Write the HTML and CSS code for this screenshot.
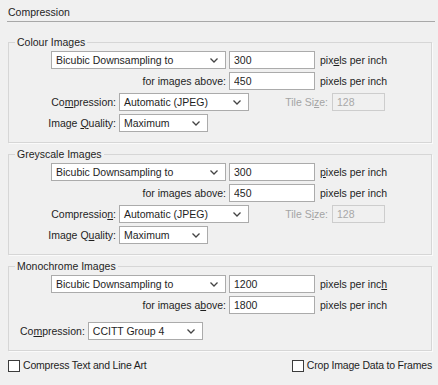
FILE: index.html
```html
<!DOCTYPE html>
<html lang="en">
<head>
  <meta charset="UTF-8" />
  <title>Compression</title>
  <link rel="stylesheet" href="styles.css">
</head>
<body>
  <div class="title">Compression</div>

  <fieldset class="group">
    <legend>Colour Images</legend>
    <div class="row row-a">
      <div class="select w-method"><span>Bicubic Downsampling to</span><svg class="chev" width="8" height="5" viewBox="0 0 8 5"><polyline points="0.5,0.5 4,4 7.5,0.5" /></svg></div>
      <input class="field" type="text" value="300" />
      <span class="unit">pix<u>e</u>ls per inch</span>
    </div>
    <div class="row row-b">
      <label class="lbl w-above">for ima<u>g</u>es above:</label>
      <input class="field" type="text" value="450" />
      <span class="unit">pixels per inch</span>
    </div>
    <div class="row row-c">
      <label class="lbl w-name">Co<u>m</u>pression:</label>
      <div class="select w-comp"><span>Automatic (JPEG)</span><svg class="chev" width="8" height="5" viewBox="0 0 8 5"><polyline points="0.5,0.5 4,4 7.5,0.5" /></svg></div>
      <label class="lbl off w-tile">Tile Si<u>z</u>e:</label>
      <input class="field tile" type="text" value="128" disabled />
    </div>
    <div class="row row-c">
      <label class="lbl w-name">Image <u>Q</u>uality:</label>
      <div class="select w-qual"><span>Maximum</span><svg class="chev" width="8" height="5" viewBox="0 0 8 5"><polyline points="0.5,0.5 4,4 7.5,0.5" /></svg></div>
    </div>
  </fieldset>

  <fieldset class="group">
    <legend>Greyscale Images</legend>
    <div class="row row-a">
      <div class="select w-method"><span>Bicubic Downsampling to</span><svg class="chev" width="8" height="5" viewBox="0 0 8 5"><polyline points="0.5,0.5 4,4 7.5,0.5" /></svg></div>
      <input class="field" type="text" value="300" />
      <span class="unit"><u>p</u>ixels per inch</span>
    </div>
    <div class="row row-b">
      <label class="lbl w-above">for ima<u>g</u>es above:</label>
      <input class="field" type="text" value="450" />
      <span class="unit">pixels per inch</span>
    </div>
    <div class="row row-c">
      <label class="lbl w-name">Compressio<u>n</u>:</label>
      <div class="select w-comp"><span>Automatic (JPEG)</span><svg class="chev" width="8" height="5" viewBox="0 0 8 5"><polyline points="0.5,0.5 4,4 7.5,0.5" /></svg></div>
      <label class="lbl off w-tile">Tile S<u>i</u>ze:</label>
      <input class="field tile" type="text" value="128" disabled />
    </div>
    <div class="row row-c">
      <label class="lbl w-name">Image Q<u>u</u>ality:</label>
      <div class="select w-qual"><span>Maximum</span><svg class="chev" width="8" height="5" viewBox="0 0 8 5"><polyline points="0.5,0.5 4,4 7.5,0.5" /></svg></div>
    </div>
  </fieldset>

  <fieldset class="group">
    <legend>Monochrome Images</legend>
    <div class="row row-a">
      <div class="select w-method"><span>Bicubic Downsampling to</span><svg class="chev" width="8" height="5" viewBox="0 0 8 5"><polyline points="0.5,0.5 4,4 7.5,0.5" /></svg></div>
      <input class="field" type="text" value="1200" />
      <span class="unit">pixels per inc<u>h</u></span>
    </div>
    <div class="row row-b">
      <label class="lbl w-above">for images a<u>b</u>ove:</label>
      <input class="field" type="text" value="1800" />
      <span class="unit">pixels per inch</span>
    </div>
    <div class="row row-mono">
      <label class="lbl">Co<u>m</u>pression:</label>
      <div class="select w-mono"><span>CCITT Group 4</span><svg class="chev" width="8" height="5" viewBox="0 0 8 5"><polyline points="0.5,0.5 4,4 7.5,0.5" /></svg></div>
    </div>
  </fieldset>

  <div class="checks">
    <label class="check"><span class="box"></span>Compress Text and Line Art</label>
    <label class="check"><span class="box"></span>Crop Image Data to Frames</label>
  </div>
</body>
</html>
```

FILE: styles.css
```css
body {
  margin: 0;
  width: 438px;
  height: 385px;
  background: #f0f0f0;
  color: #1e1e1e;
  font-family: "Liberation Sans", Arial, sans-serif;
  font-size: 10.5px;
  line-height: 13px;
  overflow: hidden;
}
u {
  text-decoration-thickness: 1px;
  text-underline-offset: 1px;
}
.title {
  margin-left: 7px;
  margin-right: 3px;
  padding: 6px 0 2px 1px;
  border-bottom: 1px solid #a8a8a8;
}
.group {
  margin: 14px 6px 0 8px;
  padding: 2px 0 10px 0;
  border: 1px solid #d6d6d6;
  box-shadow: 1px 1px 0 #fafafa;
  min-width: 0;
}
.group + .group {
  margin-top: 5px;
}
.group legend {
  margin-left: 6px;
  padding: 0 2px;
  line-height: 13px;
}
.row {
  display: flex;
  align-items: center;
  height: 18px;
  margin-top: 3px;
  gap: 3px;
}
.group .row:first-of-type {
  margin-top: 0;
}
.row-a, .row-b {
  margin-left: 42px;
}
.row-c .lbl.w-name {
  width: 107px;
}
.row-mono {
  margin-top: 8px;
  margin-left: 11px;
}
.lbl {
  text-align: right;
  white-space: nowrap;
}
.lbl.off {
  color: #a4a4a4;
}
.w-above {
  width: 175px;
}
.w-tile {
  width: 75px;
  margin-left: 1px;
  margin-right: 1px;
}
.select {
  box-sizing: border-box;
  height: 18px;
  display: flex;
  align-items: center;
  justify-content: space-between;
  padding: 0 7px 0 4px;
  background: #fff;
  border: 1px solid #ababab;
  white-space: nowrap;
}
.chev {
  fill: none;
  stroke: #444;
  stroke-width: 1.3;
}
.w-method { width: 175px; }
.w-comp { width: 130px; }
.w-qual { width: 89px; }
.w-mono { width: 115px; }
.field {
  box-sizing: border-box;
  width: 86px;
  height: 18px;
  margin: 0;
  padding: 0 4px;
  border: 1px solid #ababab;
  background: #fff;
  color: #1e1e1e;
  font: inherit;
  outline: none;
}
.field.tile {
  width: 53px;
  background: #f0f0f0;
  border-color: #cdcdcd;
  color: #a8a8a8;
}
.unit {
  margin-left: 2px;
  white-space: nowrap;
}
.checks {
  display: flex;
  justify-content: space-between;
  margin: 8px 6px 0 8px;
}
.check {
  display: flex;
  align-items: center;
  gap: 3px;
  letter-spacing: -0.2px;
}
.box {
  box-sizing: border-box;
  width: 12px;
  height: 12px;
  background: #fff;
  border: 1px solid #3c3c3c;
}
```
